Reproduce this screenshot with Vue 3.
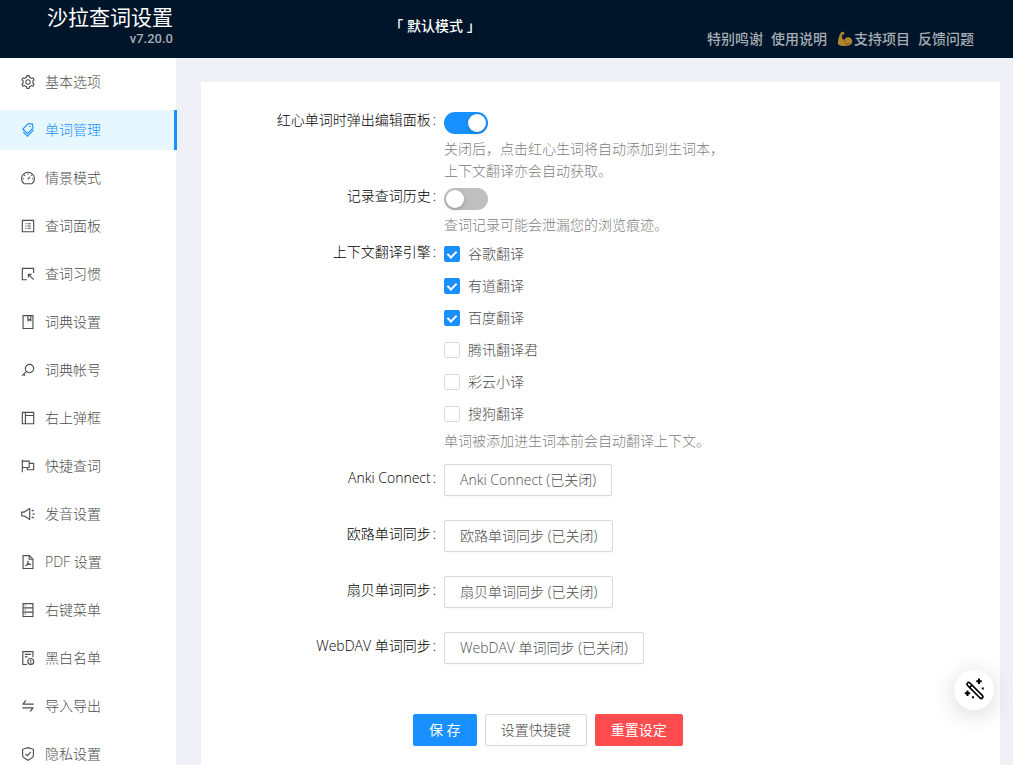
<script setup>
import { ref, reactive } from 'vue'

const menu = [
  { key: 'setting', text: '基本选项' },
  { key: 'tags', text: '单词管理' },
  { key: 'dashboard', text: '情景模式' },
  { key: 'profile', text: '查词面板' },
  { key: 'select', text: '查词习惯' },
  { key: 'book', text: '词典设置' },
  { key: 'key', text: '词典帐号' },
  { key: 'layout', text: '右上弹框' },
  { key: 'flag', text: '快捷查词' },
  { key: 'sound', text: '发音设置' },
  { key: 'pdf', text: 'PDF 设置' },
  { key: 'database', text: '右键菜单' },
  { key: 'exception', text: '黑白名单' },
  { key: 'swap', text: '导入导出' },
  { key: 'safety', text: '隐私设置' }
]

const filled = {
  setting:
    'M924.8 625.7l-65.5-56c3.1-19 4.7-38.4 4.7-57.8s-1.6-38.8-4.7-57.8l65.5-56a32.03 32.03 0 0 0 9.3-35.2l-.9-2.6a443.74 443.74 0 0 0-79.7-137.9l-1.8-2.1a32.12 32.12 0 0 0-35.1-9.5l-81.3 28.9c-30-24.6-63.5-44-99.7-57.6l-15.7-85a32.05 32.05 0 0 0-25.8-25.7l-2.7-.5c-52.1-9.4-106.9-9.4-159 0l-2.7.5a32.05 32.05 0 0 0-25.8 25.7l-15.8 85.4a351.86 351.86 0 0 0-99 57.4l-81.9-29.1a32 32 0 0 0-35.1 9.5l-1.8 2.1a446.02 446.02 0 0 0-79.7 137.9l-.9 2.6c-4.5 12.5-.8 26.5 9.3 35.2l66.3 56.6c-3.1 18.8-4.6 38-4.6 57.1 0 19.2 1.5 38.4 4.6 57.1L99 625.5a32.03 32.03 0 0 0-9.3 35.2l.9 2.6c18.1 50.4 44.9 96.9 79.7 137.9l1.8 2.1a32.12 32.12 0 0 0 35.1 9.5l81.9-29.1c29.8 24.5 63.1 43.9 99 57.4l15.8 85.4a32.05 32.05 0 0 0 25.8 25.7l2.7.5a449.4 449.4 0 0 0 159 0l2.7-.5a32.05 32.05 0 0 0 25.8-25.7l15.7-85a350 350 0 0 0 99.7-57.6l81.3 28.9a32 32 0 0 0 35.1-9.5l1.8-2.1c34.8-41.1 61.6-87.5 79.7-137.9l.9-2.6c4.5-12.3.8-26.3-9.3-35zM788.3 465.9c2.5 15.1 3.8 30.6 3.8 46.1s-1.3 31-3.8 46.1l-6.6 40.1 74.7 63.9a370.03 370.03 0 0 1-42.6 73.6L721 702.8l-31.4 25.8c-23.9 19.6-50.5 35-79.3 45.8l-38.1 14.3-17.9 97a377.5 377.5 0 0 1-85 0l-17.9-97.2-37.8-14.5c-28.5-10.8-55-26.2-78.7-45.7l-31.4-25.9-93.4 33.2c-17-22.9-31.2-47.6-42.6-73.6l75.5-64.5-6.5-40c-2.4-14.9-3.7-30.3-3.7-45.5 0-15.3 1.2-30.6 3.7-45.5l6.5-40-75.5-64.5c11.3-26.1 25.6-50.7 42.6-73.6l93.4 33.2 31.4-25.9c23.7-19.5 50.2-34.9 78.7-45.7l37.9-14.3 17.9-97.2c28.1-3.2 56.8-3.2 85 0l17.9 97 38.1 14.3c28.7 10.8 55.4 26.2 79.3 45.8l31.4 25.8 92.8-32.9c17 22.9 31.2 47.6 42.6 73.6L781.8 426l6.5 39.9zM512 336a176 176 0 1 0 0 352 176 176 0 1 0 0-352zm0 64a112 112 0 1 1 0 224 112 112 0 1 1 0-224z',
  tags:
    'M483.2 790.3L861.4 412c1.7-1.7 2.5-4 2.3-6.3l-25.5-301.4c-.7-7.8-6.8-13.9-14.6-14.6L522.2 64.3c-2.3-.2-4.7.6-6.3 2.3L137.7 444.8a8.03 8.03 0 0 0 0 11.3l334.2 334.2c3.1 3.2 8.2 3.2 11.3 0zm62.6-651.7l224.6 19 19 224.6L477.5 694 233.9 450.5l311.9-311.9zm60.16 186.23a48 48 0 1 0 67.88-67.89 48 48 0 1 0-67.88 67.89zM889.7 539.8l-39.6-39.5a8.03 8.03 0 0 0-11.3 0l-362 361.3-237.6-237a8.03 8.03 0 0 0-11.3 0l-39.6 39.5a8.03 8.03 0 0 0 0 11.3l243.2 242.8 39.6 39.5c3.1 3.1 8.2 3.1 11.3 0l407.3-406.6c3.1-3.1 3.1-8.2 0-11.3z',
  flag:
    'M880 305H624V192c0-17.7-14.3-32-32-32H184v-40c0-4.4-3.6-8-8-8h-56c-4.4 0-8 3.6-8 8v784c0 4.4 3.6 8 8 8h56c4.4 0 8-3.6 8-8V640h248v113c0 17.7 14.3 32 32 32h416c17.7 0 32-14.3 32-32V337c0-17.7-14.3-32-32-32zM184 568V232h368v336H184zm656 145H504v-73h112c4.4 0 8-3.6 8-8V377h216v336z',
  sound:
    'M625.9 115c-5.9 0-11.9 1.6-17.4 5.3L254 352H90c-8.8 0-16 7.2-16 16v288c0 8.8 7.2 16 16 16h164l354.5 231.7c5.5 3.6 11.6 5.3 17.4 5.3 16.7 0 32.1-13.3 32.1-32.1V147.1c0-18.8-15.4-32.1-32.1-32.1zM586 803L293.4 611.7l-18-11.7H146V424h129.4l17.9-11.7L586 221v582zm348-327H806c-8.8 0-16 7.2-16 16v40c0 8.8 7.2 16 16 16h128c8.8 0 16-7.2 16-16v-40c0-8.8-7.2-16-16-16zm-41.9 261.8l-110.3-63.7a15.9 15.9 0 0 0-21.7 5.9l-19.9 34.5c-4.4 7.6-1.8 17.4 5.8 21.8L856.3 800a15.9 15.9 0 0 0 21.7-5.9l19.9-34.5c4.4-7.6 1.7-17.4-5.8-21.8zM760 344a15.9 15.9 0 0 0 21.7 5.9L892 286.2c7.6-4.4 10.2-14.2 5.8-21.8L878 230a15.9 15.9 0 0 0-21.7-5.9L746 287.8a15.99 15.99 0 0 0-5.8 21.8L760 344z',
  swap:
    'M847.9 592H152c-4.4 0-8 3.6-8 8v60c0 4.4 3.6 8 8 8h605.2L612.9 851c-4.1 5.2-.4 13 6.3 13h72.5c4.9 0 9.5-2.2 12.6-6.1l168.8-214.1c16.5-21 1.6-51.8-25.2-51.8zM872 356H266.8l144.3-183c4.1-5.2.4-13-6.3-13h-72.5c-4.9 0-9.5 2.2-12.6 6.1L150.9 380.2c-16.5 21-1.6 51.8 25.1 51.8h696c4.4 0 8-3.6 8-8v-60c0-4.4-3.6-8-8-8z'
}

const stroked = {
  dashboard:
    'M248 876A412 412 0 1 1 776 876ZM512 220V300M272 320L328 376M752 320L710 362M180 560H260M764 560H844M500 596L640 440',
  profile:
    'M148 148H876V876H148ZM340 368H412M340 512H412M340 656H412M484 368H688M484 512H688M484 656H688',
  select: 'M440 876H148V148H876V440M876 876L560 560M536 740V536H740M536 536L600 600',
  book: 'M196 100H828V924H196ZM508 100V420L600 350L692 420V100',
  key: 'M608 148A268 268 0 1 1 608 684A268 268 0 1 1 608 148ZM418 606L136 888M240 784L330 874',
  layout: 'M148 148H876V876H148ZM348 148V876M348 348H876',
  pdf:
    'M196 100H600L828 328V924H196ZM590 100V338H828M496 430C540 560 470 690 350 764M500 540C560 650 630 690 710 660M390 700L650 640',
  database: 'M196 100H828V924H196ZM196 376H828M196 648H828M300 238H372M300 512H372M300 786H372',
  exception:
    'M440 924H180V100H828V470M304 282H700M304 440H480M688 540A190 190 0 1 1 688 920A190 190 0 1 1 688 540ZM688 630V750M688 790V840',
  safety: 'M512 102L856 212V620Q856 720 512 914Q168 720 168 620V212ZM350 500L476 620L690 376'
}

const active = ref('tags')
const form = reactive({ editOnFav: true, history: false })
const engines = reactive([
  { id: 'google', text: '谷歌翻译', on: true },
  { id: 'youdao', text: '有道翻译', on: true },
  { id: 'baidu', text: '百度翻译', on: true },
  { id: 'tencent', text: '腾讯翻译君', on: false },
  { id: 'caiyun', text: '彩云小译', on: false },
  { id: 'sogou', text: '搜狗翻译', on: false }
])
const syncs = [
  { id: 'anki', label: 'Anki Connect', text: 'Anki Connect (已关闭)' },
  { id: 'eudic', label: '欧路单词同步', text: '欧路单词同步 (已关闭)' },
  { id: 'shanbay', label: '扇贝单词同步', text: '扇贝单词同步 (已关闭)' },
  { id: 'webdav', label: 'WebDAV 单词同步', text: 'WebDAV 单词同步 (已关闭)' }
]
</script>

<template>
  <div class="page">
    <header class="header">
      <div class="brand">
        <h1>沙拉查词设置</h1>
        <span class="version">v7.20.0</span>
      </div>
      <span class="mode">「 默认模式 」</span>
      <nav class="links">
        <a href="#">特别鸣谢</a>
        <a href="#">使用说明</a>
        <a href="#" class="support">
          <svg viewBox="0 0 16 16" width="16" height="16" aria-hidden="true">
            <path
              d="M4.300 1.200C5.300.6 6.800.8 7.200 1.700c.3.8 0 1.700-.7 2.100-.6.3-1.100.3-1.300.8-.3 1-.1 2.300.3 3.300.9.2 1.500.7 1.900 1.200.4-1.500 1.500-2.700 3.200-2.900 2.700-.3 4.600 1.500 4.600 4 0 2.900-2.600 4.500-6.400 4.700-3.900.2-7-.5-7.700-2C.4 10.900 2.200 3.400 4.300 1.200Z"
              fill="#f5b52e"
            />
            <path d="M7.400 9.100c.1.900.6 1.500 1.300 1.900M8 12.800c1.900.6 3.800.1 4.800-1.300M4.700 3.300l1.500.3" fill="none" stroke="#9c6510" stroke-width=".8" />
          </svg>
          <span>支持项目</span>
        </a>
        <a href="#">反馈问题</a>
      </nav>
    </header>

    <div class="body">
      <aside class="sider">
        <ul class="menu">
          <li v-for="m in menu" :key="m.key">
            <a href="#" class="item" :class="{ active: m.key === active }" @click.prevent="active = m.key">
              <svg viewBox="64 64 896 896" width="14" height="14" aria-hidden="true">
                <path v-if="filled[m.key]" :d="filled[m.key]" fill="currentColor" fill-rule="evenodd" />
                <path v-else :d="stroked[m.key]" fill="none" stroke="currentColor" stroke-width="72" />
              </svg>
              <span>{{ m.text }}</span>
            </a>
          </li>
        </ul>
      </aside>

      <main class="main">
        <form class="card" @submit.prevent>
          <div class="row">
            <label class="label" for="edit">红心单词时弹出编辑面板<span class="colon">:</span></label>
            <div class="control toggle">
              <input id="edit" v-model="form.editOnFav" class="switch" type="checkbox" role="switch" />
              <p class="help">关闭后，点击红心生词将自动添加到生词本，<br />上下文翻译亦会自动获取。</p>
            </div>
          </div>
          <div class="row snug">
            <label class="label" for="history">记录查词历史<span class="colon">:</span></label>
            <div class="control toggle">
              <input id="history" v-model="form.history" class="switch" type="checkbox" role="switch" />
              <p class="help">查词记录可能会泄漏您的浏览痕迹。</p>
            </div>
          </div>
          <div class="row engines" role="group" aria-labelledby="engines">
            <span id="engines" class="label">上下文翻译引擎<span class="colon">:</span></span>
            <div class="control">
              <label v-for="e in engines" :key="e.id" class="check">
                <input v-model="e.on" type="checkbox" />
                <span>{{ e.text }}</span>
              </label>
              <p class="help">单词被添加进生词本前会自动翻译上下文。</p>
            </div>
          </div>
          <div v-for="s in syncs" :key="s.id" class="row sync">
            <label class="label" :for="s.id">{{ s.label }}<span class="colon">:</span></label>
            <div class="control">
              <button :id="s.id" type="button" class="btn">{{ s.text }}</button>
            </div>
          </div>
          <div class="actions">
            <button type="submit" class="btn primary">保 存</button>
            <button type="button" class="btn">设置快捷键</button>
            <button type="button" class="btn danger">重置设定</button>
          </div>
        </form>
      </main>
    </div>

    <button type="button" class="float" aria-label="魔法棒">
      <svg viewBox="0 0 24 24" width="24" height="24" aria-hidden="true">
        <g fill="none" stroke="#000" stroke-width="1.700" stroke-linejoin="round">
          <path d="M5.500 5a1.700 1.700 0 0 1 2.400 0L20.500 17.600a1.700 1.700 0 0 1-2.400 2.400L5.500 7.400a1.700 1.700 0 0 1 0-2.400ZM10 7.100L7.600 9.500" />
          <path d="M17 .5v5.400M14.300 3.200h5.400M5.500 12.600V18M2.800 15.300h5.400" stroke-width="2" />
        </g>
        <path d="M19.800 9.400h2v2h-2zM10 18.200h2v2h-2z" />
      </svg>
    </button>
  </div>
</template>

<style>
body {
  margin: 0;
  background: #f0f1f6;
}
</style>

<style scoped>
.page {
  display: flex;
  flex-direction: column;
  height: 100vh;
  overflow: hidden;
  font: 14px/22px "Open Sans", "Noto Sans CJK SC", sans-serif;
  font-weight: 300;
  color: #4d4d4d;
}
.header {
  display: grid;
  grid-template-columns: 173px 1fr auto;
  flex: none;
  height: 58px;
  padding-right: 39px;
  background: #001529;
  font-weight: 400;
}
.brand {
  display: flex;
  flex-direction: column;
  align-items: flex-end;
  padding-top: 6px;
  font-family: Roboto, "Noto Sans CJK SC", sans-serif;
}
h1 {
  margin: 0;
  font-size: 21px;
  line-height: 24px;
  font-weight: 400;
  color: #fff;
}
.version {
  font-size: 13px;
  line-height: 18px;
  font-weight: 500;
  color: #a6adb4;
}
.mode {
  justify-self: center;
  padding: 15px 10px 0 0;
  font-weight: 500;
  color: #fff;
}
.links {
  display: flex;
  align-items: flex-start;
  gap: 8px;
  padding-top: 28px;
  font-weight: 500;
}
.links a {
  color: #a6adb4;
  text-decoration: none;
}
.links .support {
  display: flex;
  align-items: center;
  gap: 1px;
  padding-left: 2px;
}
.support svg {
  opacity: 0.7;
}
.body {
  display: flex;
  flex: 1;
  min-height: 0;
}
.sider {
  flex: none;
  width: 176px;
  background: #fff;
}
.menu {
  display: flex;
  flex-direction: column;
  gap: 8px;
  margin: 0;
  padding: 4px 0;
  list-style: none;
}
.item {
  display: flex;
  align-items: center;
  gap: 10px;
  height: 40px;
  padding-left: 21px;
  color: #4d4d4d;
  text-decoration: none;
}
.item.active {
  margin-right: -1px;
  border-right: 3px solid #1890ff;
  background: #e6f7ff;
  color: #1890ff;
}
.main {
  flex: 1;
  padding: 24px 13px 0 25px;
}
.card {
  box-sizing: border-box;
  height: 100%;
  padding: 24px;
  background: #fff;
}
.row {
  display: grid;
  grid-template-columns: 7fr 17fr;
}
.snug {
  margin-bottom: 2px;
}
.engines {
  margin-bottom: 12px;
}
.sync {
  margin-bottom: 24px;
}
.label {
  padding: 3px 8px 0 0;
  text-align: right;
  color: #000;
}
.colon {
  margin-left: 2px;
}
.toggle {
  padding-top: 6px;
}
.switch {
  display: block;
  appearance: none;
  width: 44px;
  height: 22px;
  margin: 0 0 4px;
  padding: 2px;
  border-radius: 11px;
  background: #bfbfbf;
}
.switch::before {
  content: "";
  display: block;
  width: 18px;
  height: 18px;
  border-radius: 50%;
  background: #fff;
  box-shadow: 0 2px 4px rgba(0, 35, 11, 0.2);
}
.switch:checked {
  background: #1890ff;
}
.switch:checked::before {
  margin-left: auto;
}
.help {
  margin: 0;
  color: #808080;
}
.check {
  display: flex;
  align-items: center;
  gap: 8px;
  height: 32px;
}
.check input {
  display: grid;
  place-items: center;
  appearance: none;
  box-sizing: border-box;
  width: 16px;
  height: 16px;
  margin: 0;
  border: 1px solid #d9d9d9;
  border-radius: 2px;
  background: #fff;
}
.check input:checked {
  border-color: #1890ff;
  background: #1890ff;
}
.check input:checked::before {
  content: "";
  width: 4px;
  height: 7px;
  margin-bottom: 2px;
  border: solid #fff;
  border-width: 0 2px 2px 0;
  transform: rotate(45deg);
}
.btn {
  display: block;
  box-sizing: border-box;
  min-width: 64px;
  height: 32px;
  padding: 0 15px;
  border: 1px solid #d9d9d9;
  border-radius: 2px;
  background: #fff;
  box-shadow: 0 2px 0 rgba(0, 0, 0, 0.02);
  font: inherit;
  color: #4d4d4d;
  white-space: nowrap;
}
.primary {
  border-color: #1890ff;
  background: #1890ff;
  color: #fff;
  font-weight: 400;
}
.danger {
  border-color: #ff4d4f;
  background: #ff4d4f;
  color: #fff;
  font-weight: 400;
}
.actions {
  display: flex;
  gap: 8px;
  margin: 50px 0 0 25%;
}
.float {
  position: fixed;
  right: 19px;
  bottom: 55px;
  display: grid;
  place-items: center;
  width: 40px;
  height: 40px;
  padding: 0;
  border: 0;
  border-radius: 50%;
  background: #fff;
  box-shadow: 0 4px 24px rgba(0, 0, 0, 0.16);
}
</style>
